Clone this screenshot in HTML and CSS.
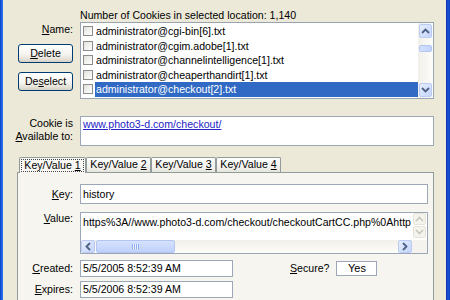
FILE: index.html
```html
<!DOCTYPE html>
<html>
<head>
<meta charset="utf-8">
<link rel="stylesheet" href="styles.css">
</head>
<body>
<div class="window">
  <div class="frame frame-left"></div>
  <div class="client">
    <div class="main-grid">
      <div></div>
      <div class="count">Number of Cookies in selected location: 1,140</div>
      <div class="side">
        <div class="label"><u>N</u>ame:</div>
        <button class="btn btn-first"><u>D</u>elete</button>
        <button class="btn btn-second">De<u>s</u>elect</button>
      </div>
      <div class="list">
        <div class="list-items">
          <div class="item"><span class="cb"></span><span class="txt">administrator@cgi-bin[6].txt</span></div>
          <div class="item"><span class="cb"></span><span class="txt">administrator@cgim.adobe[1].txt</span></div>
          <div class="item"><span class="cb"></span><span class="txt">administrator@channelintelligence[1].txt</span></div>
          <div class="item"><span class="cb"></span><span class="txt">administrator@cheaperthandirt[1].txt</span></div>
          <div class="item selected"><span class="cb"></span><span class="txt">administrator@checkout[2].txt</span></div>
        </div>
        <div class="vscroll">
          <div class="sbtn"><svg width="9" height="6" viewBox="0 0 9 6"><path d="M1 5 L4.5 1.5 L8 5" fill="none" stroke="#4D6185" stroke-width="1.8"/></svg></div>
          <div class="track"><div class="thumb"></div></div>
          <div class="sbtn"><svg width="9" height="6" viewBox="0 0 9 6"><path d="M1 1 L4.5 4.5 L8 1" fill="none" stroke="#4D6185" stroke-width="1.8"/></svg></div>
        </div>
      </div>
      <div class="label avail">Cookie is<br><u>A</u>vailable to:</div>
      <div class="box avail-box"><span class="link">www.photo3-d.com/checkout/</span></div>
    </div>

    <div class="tabs">
      <div class="tab-strip">
        <div class="tab tab-active"><span class="focus">Key/Value <u>1</u></span></div>
        <div class="tab">Key/Value <u>2</u></div>
        <div class="tab">Key/Value <u>3</u></div>
        <div class="tab">Key/Value <u>4</u></div>
      </div>
      <div class="panel">
        <div class="panel-grid">
          <div class="label mid"><u>K</u>ey:</div>
          <div class="box key-box">history</div>

          <div class="label r-value"><u>V</u>alue:</div>
          <div class="box value-box r-value">
            <div class="vtext">https%3A//www.photo3-d.com/checkout/checkoutCartCC.php%0Ahttp</div>
            <div class="vvs">
              <div class="sbtn dis"><svg width="9" height="6" viewBox="0 0 9 6"><path d="M1 5 L4.5 1.5 L8 5" fill="none" stroke="#C9C7BA" stroke-width="1.6"/></svg></div>
              <div class="sbtn dis"><svg width="9" height="6" viewBox="0 0 9 6"><path d="M1 1 L4.5 4.5 L8 1" fill="none" stroke="#C9C7BA" stroke-width="1.6"/></svg></div>
            </div>
            <div class="hs">
              <div class="hbtn"><svg width="6" height="9" viewBox="0 0 6 9"><path d="M5 1 L1.5 4.5 L5 8" fill="none" stroke="#4D6185" stroke-width="1.8"/></svg></div>
              <div class="hthumb"><span class="grip"></span></div>
              <div class="htrack"></div>
              <div class="hbtn"><svg width="6" height="9" viewBox="0 0 6 9"><path d="M1 1 L4.5 4.5 L1 8" fill="none" stroke="#4D6185" stroke-width="1.8"/></svg></div>
            </div>
            <div class="corner"></div>
          </div>

          <div class="label mid r-created"><u>C</u>reated:</div>
          <div class="field-row r-created">
            <div class="box date">5/5/2005 8:52:39 AM</div>
            <div class="label secure"><u>S</u>ecure?</div>
            <div class="box yes">Yes</div>
          </div>

          <div class="label mid r-expires"><u>E</u>xpires:</div>
          <div class="field-row r-expires">
            <div class="box date">5/5/2006 8:52:39 AM</div>
          </div>
        </div>
      </div>
    </div>
  </div>
  <div class="frame frame-right"></div>
</div>
</body>
</html>
```

FILE: styles.css
```css
* { box-sizing: border-box; }

body {
  margin: 0;
  background: #ECE9D8;
  font-family: "Liberation Sans", Arial, sans-serif;
  font-size: 10.6px;
  color: #000;
  overflow: hidden;
}

.window {
  display: flex;
  width: 450px;
  height: 300px;
  overflow: hidden;
  background: #ECE9D8;
}

.frame-left {
  width: 3px;
  background: linear-gradient(to right, #0A44C8, #1D62E4 60%, #3B7EF0);
}

.frame-right {
  width: 4px;
  background: linear-gradient(to right, #0B2EA6, #1A56DA 50%, #0D3CBE);
}

.client {
  flex: 1;
  padding-top: 9px;
}

.main-grid {
  display: grid;
  grid-template-columns: 70px 354px;
  column-gap: 7px;
}

.count {
  line-height: 12px;
  height: 13px;
  white-space: nowrap;
}

.label {
  line-height: 13px;
  text-align: right;
  white-space: nowrap;
}

.side {
  display: flex;
  flex-direction: column;
  align-items: flex-end;
}

.side .label { margin-top: 1px; }

.btn {
  width: 55px;
  height: 19px;
  padding: 0;
  font: inherit;
  color: #000;
  border: 1px solid #003C74;
  border-radius: 3px;
  background: linear-gradient(#FFFFFF, #F5F4F0 55%, #E3DFD5 85%, #D6D0C5);
  line-height: 17px;
}

.btn-first { margin-top: 8px; }
.btn-second { margin-top: 9px; }

.list {
  height: 77px;
  border: 1px solid #98A4B4;
  background: #fff;
  display: flex;
}

.list-items {
  flex: 1;
  padding-top: 1px;
}

.item {
  height: 14.5px;
  display: flex;
  align-items: center;
}

.cb {
  width: 10px;
  height: 10px;
  border: 1px solid #8C8C8C;
  margin: 0 2px 0 2px;
  background: linear-gradient(135deg, #E2E2DC, #FFFFFF);
  flex: none;
}

.txt {
  flex: 1;
  padding-left: 1px;
  line-height: 14.5px;
  white-space: nowrap;
}

.selected .txt {
  background: #316AC5;
  color: #fff;
}

.vscroll {
  width: 15px;
  display: flex;
  flex-direction: column;
  padding: 1px 0;
  background: linear-gradient(to right, #F1EFE8, #FDFDFA);
}

.sbtn {
  height: 14px;
  margin: 0 1px;
  border: 1px solid #BACCF5;
  border-radius: 2px;
  background: linear-gradient(135deg, #E6EEFE, #C4D4FA);
  display: flex;
  align-items: center;
  justify-content: center;
}

.track {
  flex: 1;
}

.thumb {
  margin: 7px 1px 0;
  height: 7px;
  border: 1px solid #B3C6F3;
  border-radius: 2px;
  background: linear-gradient(to right, #D3E0FD, #C2D3FB);
}

.avail {
  margin-top: 17px;
  padding-top: 1px;
}

.box {
  background: #fff;
  border: 1px solid #9CA8B7;
  white-space: nowrap;
  overflow: hidden;
}

.avail-box {
  margin-top: 17px;
  height: 30px;
  padding: 0 2px;
  line-height: 13px;
  padding-top: 1px;
}

.link {
  color: #2323C6;
  text-decoration: underline;
}

.tabs {
  margin: 11px 0 0 14px;
  width: 417px;
}

.tab-strip {
  display: flex;
  align-items: flex-start;
  padding-left: 2px;
  height: 15px;
}

.tab {
  width: 65px;
  height: 15px;
  border: 1px solid #919B9C;
  border-bottom: none;
  border-radius: 2px 2px 0 0;
  background: linear-gradient(#FFFFFF, #F1F0EB 70%, #E6E4DA);
  text-align: center;
  line-height: 13px;
  white-space: nowrap;
}

.tab + .tab { margin-left: 0; }

.tab-active {
  width: 67px;
  height: 16px;
  position: relative;
  z-index: 1;
  background: #F8F7F3;
  padding-top: 1px;
}

.focus {
  display: inline-block;
  border: 1px dotted #444;
  line-height: 11px;
  padding: 0 2px;
}

.panel {
  border: 1px solid #919B9C;
  background: #F6F5F0;
  height: 140px;
}

.panel-grid {
  display: grid;
  grid-template-columns: 55px 348px;
  column-gap: 7px;
  padding-top: 11px;
}

.mid { align-self: center; }

.key-box {
  height: 20px;
  line-height: 18px;
  padding: 0 2px;
}

.r-value { margin-top: 8px; }
.r-created { margin-top: 6px; }
.r-expires { margin-top: 4px; }

.value-box {
  height: 42px;
  display: grid;
  grid-template-columns: 1fr 15px;
  grid-template-rows: 27px 13px;
}

.vtext {
  padding: 2px 2px 0;
  line-height: 14px;
  overflow: hidden;
}

.vvs {
  display: flex;
  flex-direction: column;
  gap: 1px;
  padding-top: 0;
}

.vvs .sbtn { height: 12px; }

.sbtn.dis {
  border-color: #E6E4DA;
  background: #F4F3EE;
}

.hs {
  display: flex;
  background: linear-gradient(#F1EFE8, #FDFDFA);
}

.hbtn {
  width: 14px;
  height: 13px;
  border: 1px solid #BACCF5;
  border-radius: 2px;
  background: linear-gradient(135deg, #E6EEFE, #C4D4FA);
  display: flex;
  align-items: center;
  justify-content: center;
}

.hthumb {
  width: 79px;
  margin-left: 1px;
  border: 1px solid #B3C6F3;
  border-radius: 2px;
  background: linear-gradient(#D6E2FD, #BFD1FB);
  display: flex;
  align-items: center;
  justify-content: center;
}

.grip {
  width: 7px;
  height: 5px;
  background: repeating-linear-gradient(to right, #8EAEF0 0 1px, #EEF3FE 1px 2px);
}

.htrack { flex: 1; }

.corner { background: #F4F3EE; }

.field-row {
  display: flex;
  align-items: center;
}

.date {
  width: 153px;
  height: 17px;
  line-height: 15px;
  padding: 0 2px;
}

.secure {
  margin-left: 57px;
}

.yes {
  width: 41px;
  height: 15px;
  margin-left: 7px;
  line-height: 13px;
  text-align: center;
  font-size: 11px;
}
```
